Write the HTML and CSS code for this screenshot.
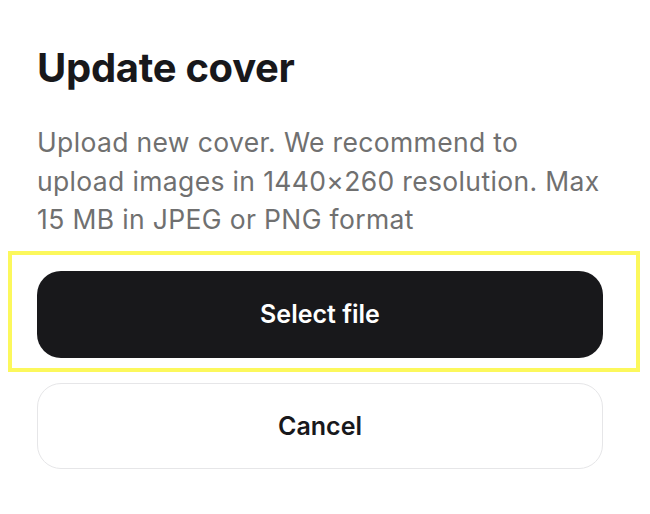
FILE: index.html
```html
<!DOCTYPE html>
<html lang="en">
<head>
  <meta charset="UTF-8" />
  <title>Update cover</title>
  <link rel="stylesheet" href="styles.css">
</head>
<body>
  <div class="dialog">
    <h2 class="title">Update cover</h2>
    <p class="hint">Upload new cover. We recommend to upload images in 1440×260 resolution. Max 15 MB in JPEG or PNG format</p>

    <div class="actions">
      <div class="highlight-wrap">
        <button class="btn primary">Select file</button>
        <span class="highlight"></span>
      </div>
      <button class="btn secondary">Cancel</button>
    </div>
  </div>
</body>
</html>
```

FILE: styles.css
```css
body {
  margin: 0;
  background-color: #ffffff;
  font-family: 'Inter', 'Liberation Sans', sans-serif;
  color: #18181b;
}

.dialog {
  padding: 44px 47px 0 37px;
}

.title {
  margin: 0;
  font-size: 40px;
  font-weight: 700;
  line-height: 48px;
  letter-spacing: -0.3px;
}

.hint {
  margin: 31px 0 0;
  font-size: 26.5px;
  line-height: 38.5px;
  letter-spacing: 0.35px;
  color: #707070;
}

.actions {
  display: flex;
  flex-direction: column;
  gap: 25px;
  margin-top: 32px;
}

.highlight-wrap {
  position: relative;
}

.btn {
  display: block;
  width: 100%;
  height: 87px;
  border-radius: 24px;
  font-family: 'Inter', 'Liberation Sans', sans-serif;
  font-size: 25px;
  font-weight: 600;
  cursor: pointer;
}

.primary {
  background-color: #18181b;
  color: #ffffff;
  border: none;
}

.secondary {
  height: 86px;
  background-color: #ffffff;
  color: #18181b;
  border: 1px solid #e6e6e8;
}

.highlight {
  position: absolute;
  top: -20px;
  left: -29px;
  right: -37px;
  bottom: -14px;
  border: 4px solid #fcf85c;
  pointer-events: none;
}
```
